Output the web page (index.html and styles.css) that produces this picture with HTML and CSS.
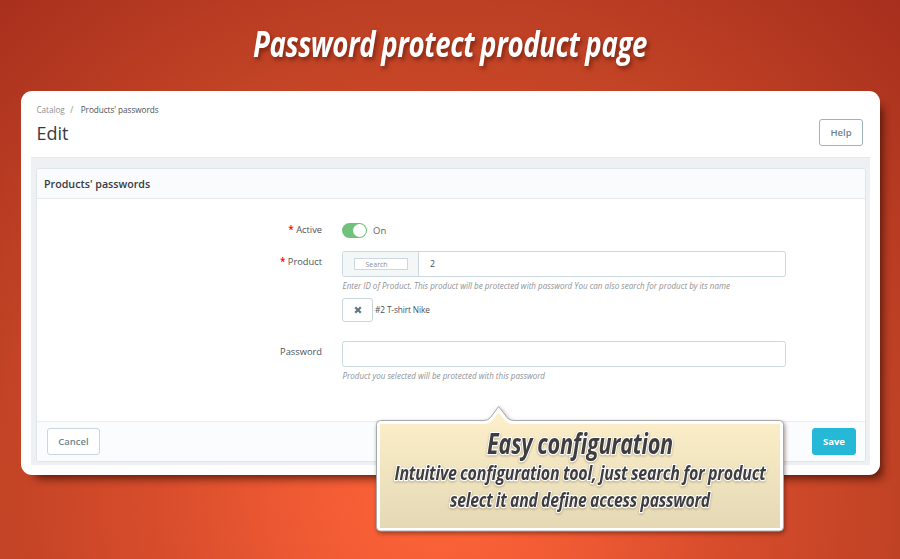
FILE: index.html
```html
<!DOCTYPE html>
<html lang="en">
<head>
<meta charset="utf-8">
<title>Password protect product page</title>
<link rel="stylesheet" href="styles.css">
</head>
<body>
<h1 class="banner">
  <svg width="900" height="91"><text x="253" y="57" textLength="394" lengthAdjust="spacingAndGlyphs">Password protect product page</text></svg>
</h1>
<main class="card">
  <header class="top">
    <div>
      <nav class="crumbs"><span class="muted">Catalog</span><span class="slash">/</span><span>Products' passwords</span></nav>
      <h2 class="title">Edit</h2>
    </div>
    <button class="btn help">Help</button>
  </header>
  <div class="content">
    <section class="panel">
      <h3 class="panel-head">Products' passwords</h3>
      <div class="form">
        <div class="row active-row">
          <label><b>*</b> Active</label>
          <div class="switch-line"><span class="switch"></span>On</div>
        </div>
        <div class="row product-row">
          <label><b>*</b> Product</label>
          <div>
            <div class="input group"><span class="addon"><span class="search">Search</span></span><span class="value">2</span></div>
            <p class="hint"><svg width="400" height="14"><text x="0.500" y="9" textLength="387.500" lengthAdjust="spacingAndGlyphs">Enter ID of Product. This product will be protected with password You can also search for product by its name</text></svg></p>
            <div class="chosen"><button class="btn remove" aria-label="Remove"><svg width="8" height="8" viewBox="0 0 8 8"><path d="M1.2 1.2l5.6 5.6M6.8 1.2L1.2 6.8"/></svg></button><span>#2 T-shirt Nike</span></div>
          </div>
        </div>
        <div class="row password-row">
          <label>Password</label>
          <div>
            <div class="input"></div>
            <p class="hint"><svg width="215" height="14"><text x="0.500" y="9" textLength="202.500" lengthAdjust="spacingAndGlyphs">Product you selected will be protected with this password</text></svg></p>
          </div>
        </div>
      </div>
      <footer class="panel-foot"><button class="btn cancel">Cancel</button><button class="btn save">Save</button></footer>
    </section>
  </div>
</main>
<aside class="callout">
  <svg width="420" height="140" viewBox="370 400 420 140">
    <defs><linearGradient id="sand" gradientUnits="userSpaceOnUse" x1="0" y1="410" x2="0" y2="528"><stop offset="0" stop-color="#fdf0cb"/><stop offset="1" stop-color="#e5d9b5"/></linearGradient></defs>
    <path class="frame" d="M380.500 420.500H484Q488 420.500 490.500 417.500L498.700 406.500L507 417.500Q509.500 420.500 513.500 420.500H779.500Q783.500 420.500 783.500 424.500V527Q783.500 531 779.500 531H380.500Q376.500 531 376.500 527V424.500Q376.500 420.500 380.500 420.500Z"/>
    <path fill="url(#sand)" d="M380 424H485Q490 423.500 493 419.500L498.700 412.500L504.500 419.500Q507.500 423.500 512.500 424H780V528H380Z"/>
    <text class="big" x="487" y="453.500" textLength="186" lengthAdjust="spacingAndGlyphs">Easy configuration</text>
    <text class="small" x="394.500" y="480" textLength="371" lengthAdjust="spacingAndGlyphs">Intuitive configuration tool, just search for product</text>
    <text class="small" x="450" y="507" textLength="260" lengthAdjust="spacingAndGlyphs">select it and define access password</text>
  </svg>
</aside>
</body>
</html>
```
FILE: styles.css
```css
* { box-sizing: border-box; }
body {
  margin: 0;
  width: 900px;
  height: 559px;
  overflow: hidden;
  position: relative;
  font-family: "Open Sans", sans-serif;
  font-size: 9px;
  color: #4b5257;
  background: radial-gradient(circle at 440px 490px, #ff6539 0, #f15b34 130px, #d84d2c 280px, #c04225 460px, #a82f1d 665px);
}
h1, h2, h3, p { margin: 0; font-weight: normal; }
svg { display: block; overflow: visible; }
.banner { height: 91px; }
.banner text {
  font: italic 700 35.500px "Open Sans", sans-serif;
  letter-spacing: -.5px;
  word-spacing: -1px;
  fill: #fff;
  filter: drop-shadow(2px 3px 2px rgba(60, 10, 0, .5));
}
.card {
  width: 859px;
  height: 384px;
  margin-left: 21px;
  padding: 0 10px 10px;
  background: #fff;
  border-radius: 11px;
  box-shadow: 8px 9px 10px -6px rgba(50, 10, 0, .8);
  display: flex;
  flex-direction: column;
}
.top {
  height: 66px;
  padding: 12px 7px 0 5.500px;
  display: flex;
  justify-content: space-between;
}
.crumbs { display: flex; line-height: 13px; font-size: 8.200px; letter-spacing: -.05px; }
.muted { color: #8c8f92; }
.slash { color: #7ba05b; margin: 0 7.500px 0 5.500px; }
.title { font-size: 18px; line-height: 26px; margin-top: 4px; color: #363a41; }
.btn {
  font: 600 9.500px "Open Sans", sans-serif;
  color: #6c868e;
  background: #fff;
  border: 1px solid #c8d7dc;
  border-radius: 3px;
  padding: 0;
}
.help { width: 44px; height: 27px; margin-top: 16px; border-color: #9fb3ba; }
.content { flex: 1; background: #eef0f2; border-top: 1px solid #e7eaeb; padding: 10px 4px 3px 5px; }
.panel {
  height: 294px;
  background: #fff;
  border: 1px solid #dde6ea;
  border-radius: 3px;
  display: flex;
  flex-direction: column;
  overflow: hidden;
}
.panel-head {
  height: 30px;
  padding-left: 7px;
  font-size: 10.700px;
  font-weight: 600;
  line-height: 30px;
  color: #363a41;
  background: #fafbfd;
  border-bottom: 1px solid #e3ebee;
}
.form { flex: 1; }
.row { display: grid; grid-template-columns: 285px 444px; column-gap: 20px; }
.row label { text-align: right; font-size: 9.300px; line-height: 14px; }
.row label b { color: #f00; font-size: 10px; line-height: 10px; font-weight: 600; }
.active-row { padding-top: 24px; height: 52px; }
.switch-line { display: flex; align-items: center; gap: 6px; height: 15px; font-size: 9.500px; color: #666; }
.switch { width: 25px; height: 15px; border-radius: 8px; background: #70c17b; padding: 1px; }
.switch::after { content: ""; display: block; width: 13px; height: 13px; margin-left: 10px; border-radius: 50%; background: #fff; }
.product-row label { margin-top: 4px; }
.product-row { height: 90px; }
.input { height: 26px; border: 1px solid #cbd8dd; border-radius: 2.500px; background: #fff; }
.group { display: flex; align-items: stretch; }
.addon { width: 76px; background: #f4f7f8; border-right: 1px solid #cbd8dd; display: flex; align-items: center; justify-content: center; }
.search { width: 54px; height: 12px; line-height: 11px; font-size: 7px; color: #8b8f92; border: 1px solid #cbd8dd; background: #fff; padding-left: 11px; }
.value { padding-left: 11px; line-height: 25px; font-size: 8.800px; }
.hint { margin-top: 3px; height: 12px; }
.hint text { font: italic 8.200px "Open Sans", sans-serif; fill: #8f9295; }
.chosen { display: flex; align-items: center; gap: 2px; margin-top: 6px; font-size: 8.300px; letter-spacing: -.12px; }
.chosen span { line-height: 24px; }
.remove { width: 31px; height: 24px; display: flex; align-items: center; justify-content: center; }
.remove path { fill: none; stroke: #607984; stroke-width: 2.300; }
.password-row label { margin-top: 4px; }
.panel-foot {
  height: 40px;
  padding: 6px 9px 0 10px;
  background: #fbfcfe;
  border-top: 1px solid #e9eef0;
  display: flex;
  justify-content: space-between;
}
.cancel { width: 53px; height: 27px; }
.save { width: 44px; height: 27px; color: #fff; background: #25b9d7; border-color: #25b9d7; font-weight: 700; }
.callout { position: absolute; left: 370px; top: 400px; }
.frame { fill: #fff; stroke: #aaa9a8; filter: drop-shadow(1px 2px 2px rgba(40, 10, 0, .45)); }
.callout text {
  font-family: "Open Sans", sans-serif;
  font-style: italic;
  font-weight: 700;
  letter-spacing: -.3px;
  word-spacing: -.5px;
  fill: #3e3d40;
  stroke: #fff;
  stroke-width: 2.500px;
  stroke-linejoin: round;
  paint-order: stroke;
  filter: drop-shadow(0 1px 1px rgba(80, 60, 20, .35));
}
.callout .big { font-size: 28px; }
.callout .small { font-size: 19.500px; }
```
